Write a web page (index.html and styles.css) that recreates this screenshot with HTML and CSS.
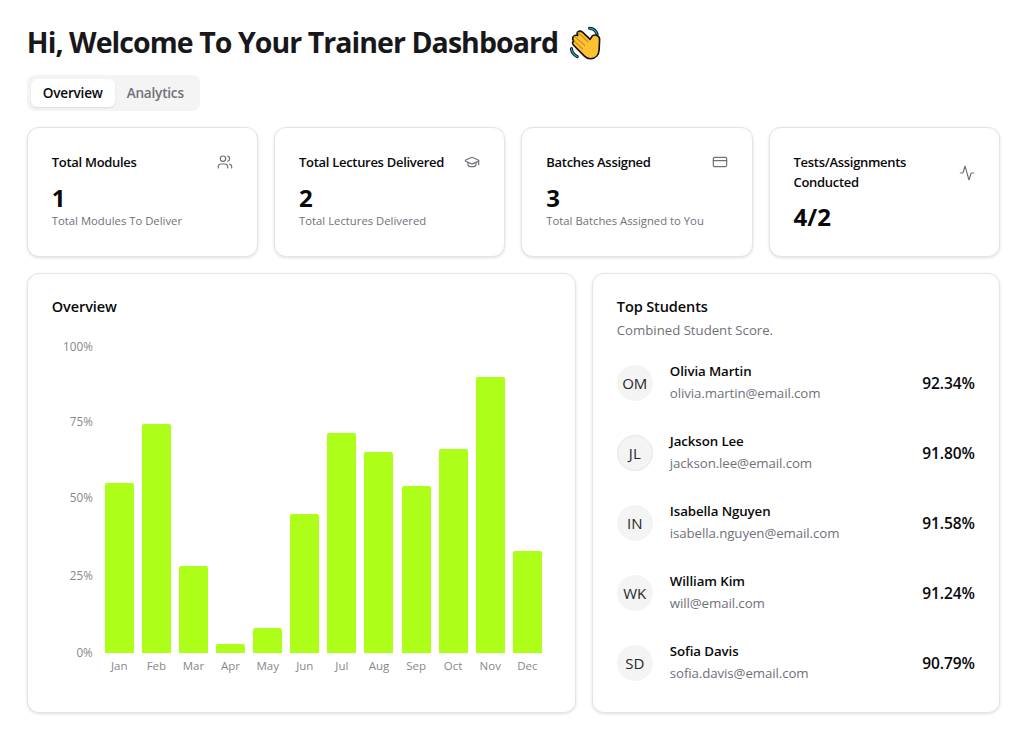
FILE: index.html
```html
<!DOCTYPE html>
<html lang="en">
<head>
<meta charset="utf-8">
<title>Trainer Dashboard</title>
<link rel="stylesheet" href="styles.css">
</head>
<body>
<main class="page">
  <h1 class="title">Hi, Welcome To Your Trainer Dashboard
    <svg class="wave" viewBox="9 4 36 36" aria-hidden="true">
      <g fill="none" stroke-linecap="round">
        <path d="M30 8.200c3.500.2 6 2.300 7.300 5.500" stroke="#111" stroke-width="3"/>
        <path d="M30 8.200c3.500.2 6 2.300 7.300 5.500" stroke="#1fa5c9" stroke-width="1.200"/>
        <path d="M12.300 28c.4 3.500 2.500 6.300 5.700 7.800" stroke="#111" stroke-width="3"/>
        <path d="M12.300 28c.4 3.500 2.500 6.300 5.700 7.800" stroke="#1fa5c9" stroke-width="1.200"/>
      </g>
      <path d="M18.500 11.800c1.400-1.300 3.200-1.100 4.600.2l7.400 7 2-3.200c1-1.300 3.800-1.600 5.200-.3 2 1 2.300 2.500 2 4.500l-.4 9c-.3 5-3.500 8.500-8 8.800-2.500.2-4.500-.8-6.300-2.600L14.500 24.700c-1.500-1.500-1.300-3.300 0-4.400-1.500-1.600-1.200-3.500.2-4.600 1-.8 2.300-.9 3.800-.5-.6-1.300-.9-2.800 0-3.400z" fill="#fdc131" stroke="#111" stroke-width="1.600" stroke-linejoin="round"/>
      <path d="M15 20.500l8.200 7.800M15.200 16l10 8.800M18.800 12.200l9.700 9.300" fill="none" stroke="#c58a10" stroke-width="1" stroke-linecap="round"/>
    </svg>
  </h1>

  <div class="tabs">
    <span class="tab tab-active">Overview</span>
    <span class="tab">Analytics</span>
  </div>

  <section class="stats">
    <article class="card stat">
      <header class="stat-head">
        <h2 class="stat-title">Total Modules</h2>
        <svg class="icon" viewBox="0 0 24 24"><path d="M16 21v-2a4 4 0 0 0-4-4H6a4 4 0 0 0-4 4v2"/><circle cx="9" cy="7" r="4"/><path d="M22 21v-2a4 4 0 0 0-3-3.870"/><path d="M16 3.130a4 4 0 0 1 0 7.750"/></svg>
      </header>
      <div class="stat-value">1</div>
      <p class="stat-note">Total Modules To Deliver</p>
    </article>
    <article class="card stat">
      <header class="stat-head">
        <h2 class="stat-title">Total Lectures Delivered</h2>
        <svg class="icon" viewBox="0 0 24 24"><path d="M21.420 10.922a1 1 0 0 0-.019-1.838L12.830 5.180a2 2 0 0 0-1.660 0L2.600 9.080a1 1 0 0 0 0 1.832l8.570 3.908a2 2 0 0 0 1.660 0z"/><path d="M22 10v6"/><path d="M6 12.500V16a6 3 0 0 0 12 0v-3.500"/></svg>
      </header>
      <div class="stat-value">2</div>
      <p class="stat-note">Total Lectures Delivered</p>
    </article>
    <article class="card stat">
      <header class="stat-head">
        <h2 class="stat-title">Batches Assigned</h2>
        <svg class="icon" viewBox="0 0 24 24"><rect x="2" y="5" width="20" height="14" rx="2"/><path d="M2 10h20"/></svg>
      </header>
      <div class="stat-value">3</div>
      <p class="stat-note">Total Batches Assigned to You</p>
    </article>
    <article class="card stat">
      <header class="stat-head stat-head-center">
        <h2 class="stat-title">Tests/Assignments Conducted</h2>
        <svg class="icon" viewBox="0 0 24 24"><path d="M22 12h-2.480a2 2 0 0 0-1.930 1.460l-2.350 8.360a.25.25 0 0 1-.48 0L9.240 2.180a.25.25 0 0 0-.48 0l-2.350 8.360A2 2 0 0 1 4.490 12H2"/></svg>
      </header>
      <div class="stat-value">4/2</div>
    </article>
  </section>

  <section class="panels">
    <article class="card chart-card">
      <h2 class="panel-title">Overview</h2>
      <div class="chart">
        <div class="y-axis">
          <span>100%</span><span>75%</span><span>50%</span><span>25%</span><span>0%</span>
        </div>
        <div class="plot">
          <div class="col"><div class="track"><div class="bar" style="height:55.4%"></div></div><span class="month">Jan</span></div>
          <div class="col"><div class="track"><div class="bar" style="height:74.6%"></div></div><span class="month">Feb</span></div>
          <div class="col"><div class="track"><div class="bar" style="height:28.3%"></div></div><span class="month">Mar</span></div>
          <div class="col"><div class="track"><div class="bar" style="height:3%"></div></div><span class="month">Apr</span></div>
          <div class="col"><div class="track"><div class="bar" style="height:8.100%"></div></div><span class="month">May</span></div>
          <div class="col"><div class="track"><div class="bar" style="height:45.300%"></div></div><span class="month">Jun</span></div>
          <div class="col"><div class="track"><div class="bar" style="height:71.600%"></div></div><span class="month">Jul</span></div>
          <div class="col"><div class="track"><div class="bar" style="height:65.500%"></div></div><span class="month">Aug</span></div>
          <div class="col"><div class="track"><div class="bar" style="height:54.400%"></div></div><span class="month">Sep</span></div>
          <div class="col"><div class="track"><div class="bar" style="height:66.500%"></div></div><span class="month">Oct</span></div>
          <div class="col"><div class="track"><div class="bar" style="height:89.900%"></div></div><span class="month">Nov</span></div>
          <div class="col"><div class="track"><div class="bar" style="height:33.200%"></div></div><span class="month">Dec</span></div>
        </div>
      </div>
    </article>

    <article class="card students-card">
      <h2 class="panel-title">Top Students</h2>
      <p class="panel-sub">Combined Student Score.</p>
      <ul class="students">
        <li class="student"><span class="avatar">OM</span><div class="who"><span class="name">Olivia Martin</span><span class="email">olivia.martin@email.com</span></div><span class="score">92.34%</span></li>
        <li class="student"><span class="avatar avatar-ring">JL</span><div class="who"><span class="name">Jackson Lee</span><span class="email">jackson.lee@email.com</span></div><span class="score">91.80%</span></li>
        <li class="student"><span class="avatar">IN</span><div class="who"><span class="name">Isabella Nguyen</span><span class="email">isabella.nguyen@email.com</span></div><span class="score">91.58%</span></li>
        <li class="student"><span class="avatar">WK</span><div class="who"><span class="name">William Kim</span><span class="email">will@email.com</span></div><span class="score">91.24%</span></li>
        <li class="student"><span class="avatar">SD</span><div class="who"><span class="name">Sofia Davis</span><span class="email">sofia.davis@email.com</span></div><span class="score">90.79%</span></li>
      </ul>
    </article>
  </section>
</main>
</body>
</html>
```

FILE: styles.css
```css
* { box-sizing: border-box; }

html, body { margin: 0; background: #fff; }

body {
  font-family: "Open Sans", "Noto Sans", sans-serif;
  color: #09090b;
}

.page {
  width: 1019px;
  height: 734px;
  padding: 23px 19.200px 0 26.800px;
  overflow: hidden;
}

.title {
  display: flex;
  align-items: center;
  gap: 10px;
  height: 38px;
  margin: 0 0 14px;
  font-size: 28.500px;
  font-weight: 700;
  letter-spacing: -0.94px;
  line-height: 38px;
  color: #18181b;
  white-space: nowrap;
}

.wave { width: 37px; height: 37px; flex: none; }

.tabs {
  display: inline-flex;
  align-items: center;
  width: 173px;
  height: 36px;
  padding: 4px;
  background: #f4f4f5;
  border-radius: 8px;
  margin-bottom: 16px;
  vertical-align: top;
}

.tab {
  height: 28px;
  padding: 0 12px;
  font-size: 13.600px;
  font-weight: 600;
  letter-spacing: -0.22px;
  line-height: 28px;
  color: #71717a;
}

.tab-active {
  background: #fff;
  color: #09090b;
  border-radius: 6px;
  box-shadow: 0 1px 2px rgba(0, 0, 0, .1);
}

.card {
  background: #fff;
  border: 1px solid #e4e4e7;
  border-radius: 12px;
  box-shadow: 0 1px 3px rgba(0, 0, 0, .12);
}

.stats {
  display: grid;
  grid-template-columns: repeat(4, 1fr);
  gap: 16px;
  margin-bottom: 16px;
}

.stat { height: 130px; padding: 24px; }

.stat-head {
  display: flex;
  align-items: flex-start;
  justify-content: space-between;
  gap: 16px;
  margin-bottom: 12px;
}

.stat-head-center { align-items: center; margin-bottom: 11px; }

.stat-title {
  margin: 0;
  font-size: 13px;
  font-weight: 600;
  letter-spacing: -0.3px;
  line-height: 20px;
}

.icon {
  width: 16px;
  height: 16px;
  flex: none;
  margin-top: 2px;
  fill: none;
  stroke: #71717a;
  stroke-width: 1.800;
  stroke-linecap: round;
  stroke-linejoin: round;
}

.stat-value {
  font-size: 24px;
  font-weight: 700;
  line-height: 28px;
}

.stat-note {
  margin: 1px 0 0;
  font-size: 11.300px;
  line-height: 16px;
  color: #71717a;
}

.panels {
  display: grid;
  grid-template-columns: 549px 1fr;
  gap: 16px;
}

.chart-card, .students-card { height: 440px; padding: 24px; }

.panel-title {
  margin: 0;
  font-size: 14.500px;
  font-weight: 600;
  letter-spacing: -0.1px;
  line-height: 18px;
}

.chart {
  display: flex;
  gap: 12px;
  height: 335px;
  margin-top: 23px;
}

.y-axis {
  display: grid;
  grid-template-rows: 75px 76px 78px 77px 14px;
  justify-items: end;
  width: 41px;
  height: 320px;
  font-size: 11.700px;
  line-height: 14px;
  color: #888;
}

.plot {
  display: flex;
  gap: 8.100px;
  width: 437px;
  padding-top: 7px;
}

.col {
  display: flex;
  flex: 1;
  flex-direction: column;
  align-items: center;
  min-width: 0;
}

.track {
  display: flex;
  align-items: flex-end;
  width: 100%;
  height: 307px;
}

.bar {
  width: 100%;
  background: #adff1a;
  border-radius: 2px 2px 0 0;
}

.month {
  margin-top: 6px;
  font-size: 11.500px;
  line-height: 14px;
  color: #888;
}

.panel-sub {
  margin: 4px 0 0;
  font-size: 13.200px;
  line-height: 20px;
  color: #71717a;
}

.students {
  display: flex;
  flex-direction: column;
  gap: 34px;
  margin: 25px 0 0;
  padding: 0;
  list-style: none;
}

.student {
  display: flex;
  align-items: center;
  gap: 16px;
  height: 36px;
}

.avatar {
  display: flex;
  align-items: center;
  justify-content: center;
  width: 36px;
  height: 36px;
  flex: none;
  background: #f4f4f5;
  border-radius: 50%;
  font-size: 15px;
  color: #27272a;
}

.avatar-ring { border: 1px solid #e4e4e7; }

.who {
  display: flex;
  flex: 1;
  flex-direction: column;
  gap: 2px;
  min-width: 0;
  padding: 0 0 3px 1px;
}

.name {
  font-size: 13.300px;
  font-weight: 600;
  letter-spacing: -0.1px;
  line-height: 20px;
}

.email {
  font-size: 13.300px;
  letter-spacing: -0.1px;
  line-height: 20px;
  color: #71717a;
}

.score {
  font-size: 15.500px;
  font-weight: 600;
  letter-spacing: -0.1px;
}
```
